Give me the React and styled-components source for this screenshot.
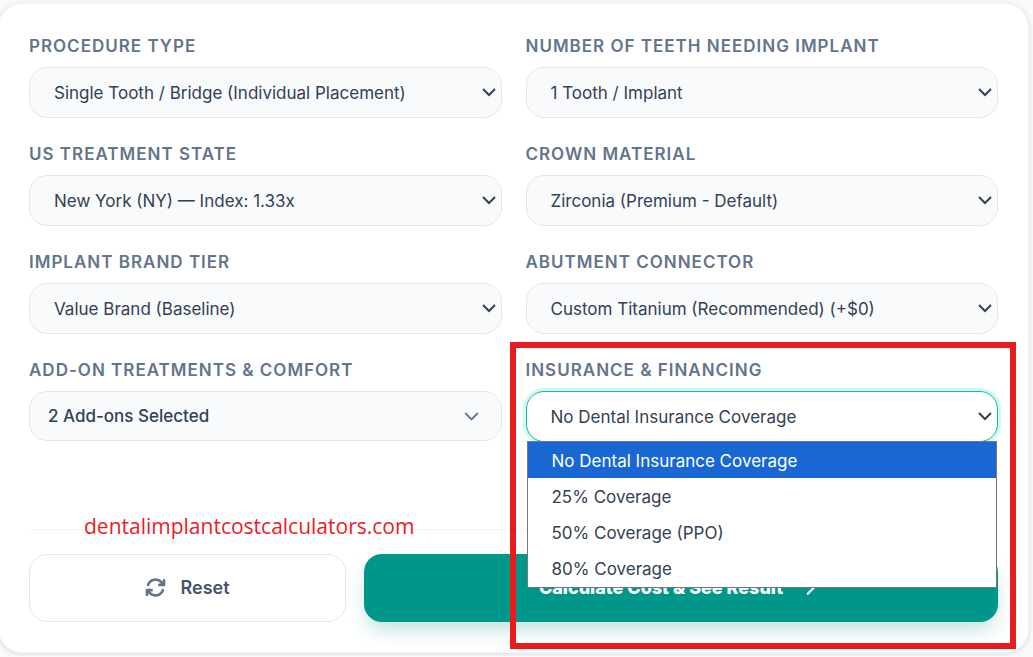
import React, { useState } from "react";
import styled, { createGlobalStyle } from "styled-components";
import { FaArrowsRotate, FaChevronRight } from "react-icons/fa6";
import { ChevronDown } from "lucide-react";

const GlobalStyle = createGlobalStyle`
  *,
  *::before,
  *::after {
    box-sizing: border-box;
  }
  body {
    margin: 0;
    background: #f8fafc;
    color: #334155;
    font-family: "Inter", "Liberation Sans", sans-serif;
  }
  button,
  select {
    font-family: inherit;
  }
`;

const Page = styled.main`
  padding: 3px 4px 3px 0;
  overflow: hidden;
`;

const CardForm = styled.form`
  margin-left: -2px;
  padding: 31px 30px 30px;
  background: #fff;
  border: 1px solid #f1f5f9;
  border-radius: 24px;
  box-shadow: 0 1px 4px 1px rgba(15, 23, 42, 0.1);
`;

const FieldGrid = styled.div`
  display: grid;
  grid-template-columns: 1fr 1fr;
  gap: 25px 24px;
`;

const Field = styled.div`
  position: relative;
  display: flex;
  flex-direction: column;
  gap: 10px;
`;

const Label = styled.label`
  color: #64748b;
  font-size: 17px;
  font-weight: 600;
  line-height: 22px;
  letter-spacing: 1px;
  text-transform: uppercase;
  white-space: nowrap;
`;

const SelectWrap = styled.div`
  position: relative;
  display: flex;
  color: #334155;
`;

const Select = styled.select`
  appearance: none;
  width: 100%;
  height: 51px;
  padding: 0 40px 0 24px;
  color: inherit;
  font-size: 17px;
  background: ${({ $open }) => ($open ? "#fff" : "#f8fafc")};
  border: 1px solid ${({ $open }) => ($open ? "#14b8a6" : "#e2e8f0")};
  border-radius: 18px;
  outline: none;
  box-shadow: ${({ $open }) => ($open ? "0 0 0 3px #ccfbf1" : "none")};
`;

const SelectArrow = styled.svg`
  position: absolute;
  top: 50%;
  right: 6px;
  width: 14px;
  height: 10px;
  margin-top: -6px;
  pointer-events: none;
`;

const AddOnButton = styled.button`
  display: flex;
  align-items: center;
  justify-content: space-between;
  height: 50px;
  padding: 0 18px;
  color: #334155;
  font-size: 17px;
  font-weight: 500;
  background: #f8fafc;
  border: 1px solid #e2e8f0;
  border-radius: 18px;

  svg {
    color: #64748b;
  }
`;

const OptionList = styled.ul`
  position: absolute;
  z-index: 2;
  top: 82px;
  left: 1px;
  right: 1px;
  margin: 0;
  padding: 0 0 1px;
  list-style: none;
  background: #fff;
  border: 1px solid #767676;
`;

const Option = styled.li`
  padding: 2px 24px 0;
  color: ${({ $active }) => ($active ? "#fff" : "#334155")};
  font-size: 17px;
  line-height: 34px;
  background: ${({ $active }) => ($active ? "#1967d2" : "transparent")};
`;

const Highlight = styled.div`
  position: absolute;
  z-index: 3;
  top: -17px;
  left: -16px;
  right: -18px;
  height: 307px;
  border: 6px solid #e81c1c;
  pointer-events: none;
`;

const Divider = styled.div`
  display: flex;
  align-items: center;
  height: 26px;
  margin: 74px 0 12px;

  &::before,
  &::after {
    content: "";
    height: 1px;
    background: #f1f5f9;
  }
  &::before {
    width: 55px;
  }
  &::after {
    flex: 1;
  }
`;

const SiteName = styled.span`
  padding-bottom: 6px;
  color: #ed1c24;
  font-family: "Open Sans", "Noto Sans", sans-serif;
  font-size: 21px;
  line-height: 26px;
`;

const Actions = styled.div`
  display: grid;
  grid-template-columns: 1fr 2fr;
  gap: 18px;
`;

const Button = styled.button`
  display: flex;
  align-items: center;
  justify-content: center;
  height: 68px;
  padding: 0 6px 2px;
  font-size: 18px;
  border-radius: 18px;
`;

const ResetButton = styled(Button)`
  gap: 14px;
  color: #475569;
  font-weight: 600;
  background: #fff;
  border: 1px solid #e2e8f0;

  svg {
    color: #64748b;
  }
`;

const SubmitButton = styled(Button)`
  gap: 18px;
  padding-right: 10px;
  color: #fff;
  font-weight: 800;
  background: #009689;
  border: 0;
  box-shadow: 0 10px 20px -4px rgba(0, 150, 137, 0.3);
`;

const coverage = [
  "No Dental Insurance Coverage",
  "25% Coverage",
  "50% Coverage (PPO)",
  "80% Coverage",
];

const fields = [
  {
    id: "procedure",
    label: "Procedure Type",
    options: ["Single Tooth / Bridge (Individual Placement)"],
  },
  {
    id: "teeth",
    label: "Number of Teeth Needing Implant",
    options: ["1 Tooth / Implant"],
  },
  {
    id: "state",
    label: "US Treatment State",
    options: ["New York (NY) — Index: 1.33x"],
  },
  {
    id: "crown",
    label: "Crown Material",
    options: ["Zirconia (Premium - Default)"],
  },
  {
    id: "brand",
    label: "Implant Brand Tier",
    options: ["Value Brand (Baseline)"],
  },
  {
    id: "abutment",
    label: "Abutment Connector",
    options: ["Custom Titanium (Recommended) (+$0)"],
  },
];

const SelectBox = ({ id, options, open, ...rest }) => (
  <SelectWrap>
    <Select id={id} $open={open} {...rest}>
      {options.map((option) => (
        <option key={option}>{option}</option>
      ))}
    </Select>
    <SelectArrow viewBox="0 0 14 10" fill="none" aria-hidden="true">
      <path d="M1 2l6 6 6-6" stroke="currentColor" strokeWidth="2" />
    </SelectArrow>
  </SelectWrap>
);

const App = () => {
  const [insurance, setInsurance] = useState(coverage[0]);

  return (
    <>
      <GlobalStyle />
      <Page>
        <CardForm onSubmit={(e) => e.preventDefault()}>
          <FieldGrid>
            {fields.map(({ id, label, options }) => (
              <Field key={id}>
                <Label htmlFor={id}>{label}</Label>
                <SelectBox id={id} options={options} />
              </Field>
            ))}
            <Field>
              <Label htmlFor="addons">Add-on Treatments &amp; Comfort</Label>
              <AddOnButton id="addons" type="button">
                2 Add-ons Selected
                <ChevronDown size={23} strokeWidth={2} absoluteStrokeWidth />
              </AddOnButton>
            </Field>
            <Field>
              <Label htmlFor="insurance">Insurance &amp; Financing</Label>
              <SelectBox
                id="insurance"
                options={coverage}
                open
                value={insurance}
                onChange={(e) => setInsurance(e.target.value)}
              />
              <OptionList role="listbox" aria-label="Insurance & Financing">
                {coverage.map((item) => (
                  <Option
                    key={item}
                    role="option"
                    aria-selected={item === insurance}
                    $active={item === insurance}
                    onClick={() => setInsurance(item)}
                  >
                    {item}
                  </Option>
                ))}
              </OptionList>
              <Highlight />
            </Field>
          </FieldGrid>
          <Divider>
            <SiteName>dentalimplantcostcalculators.com</SiteName>
          </Divider>
          <Actions>
            <ResetButton type="reset">
              <FaArrowsRotate size={21} />
              Reset
            </ResetButton>
            <SubmitButton type="submit">
              Calculate Cost &amp; See Result
              <FaChevronRight size={18} />
            </SubmitButton>
          </Actions>
        </CardForm>
      </Page>
    </>
  );
};

export default App;
